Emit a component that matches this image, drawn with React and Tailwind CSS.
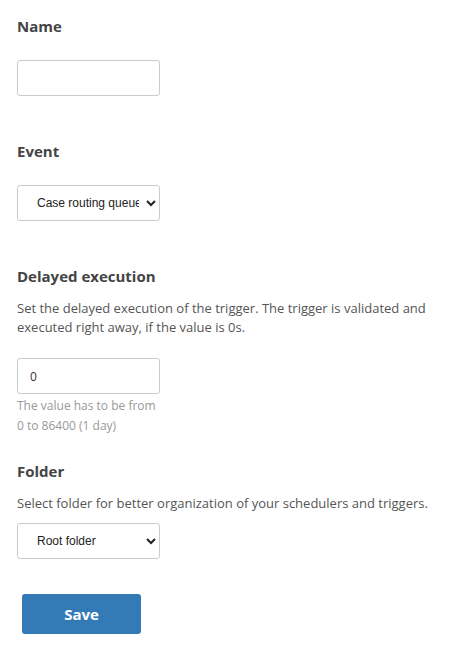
import React from "react";

const font = { fontFamily: '"Open Sans", "Liberation Sans", sans-serif' };

export default function App() {
  return (
    <div
      className="w-[458px] min-h-[665px] bg-white pl-[17px] pr-4 pt-[16px] text-[#555]"
      style={font}
    >
      <h3 className="text-[15px] leading-[20px] font-bold text-[#444]">Name</h3>
      <input
        type="text"
        className="mt-[24px] block h-[36px] w-[143px] rounded-[3px] border border-[#ccc] bg-white px-3 text-[12px] text-[#333] outline-none"
      />

      <h3 className="mt-[45px] text-[15px] leading-[20px] font-bold text-[#444]">Event</h3>
      <select
        defaultValue="crq"
        className="mt-[24px] block h-[36px] w-[143px] rounded-[3px] border border-[#ccc] bg-white pl-[15px] pr-[4px] text-[12px] text-[#222]"
        style={{ fontFamily: '"Liberation Sans", Arial, sans-serif' }}
      >
        <option value="crq">Case routing queue event</option>
      </select>

      <h3 className="mt-[45px] text-[15px] leading-[20px] font-bold text-[#444]">
        Delayed execution
      </h3>
      <p className="mt-[13px] text-[13px] leading-[18.6px] text-[#555]">
        Set the delayed execution of the trigger. The trigger is validated and executed right
        away, if the value is 0s.
      </p>
      <input
        type="text"
        defaultValue="0"
        className="mt-[22px] block h-[36px] w-[143px] rounded-[3px] border border-[#ccc] bg-white px-3 text-[12px] text-[#333] outline-none"
      />
      <p className="mt-[2px] w-[143px] text-[12px] leading-[20px] text-[#999]">
        The value has to be from 0 to 86400 (1 day)
      </p>

      <h3 className="mt-[25px] text-[15px] leading-[20px] font-bold text-[#444]">Folder</h3>
      <p className="mt-[13px] text-[13px] leading-[19px] text-[#555]">
        Select folder for better organization of your schedulers and triggers.
      </p>
      <select
        defaultValue="root"
        className="mt-[10px] block h-[36px] w-[143px] rounded-[3px] border border-[#ccc] bg-white pl-[15px] pr-[4px] text-[12px] text-[#222]"
        style={{ fontFamily: '"Liberation Sans", Arial, sans-serif' }}
      >
        <option value="root">Root folder</option>
      </select>

      <button
        type="button"
        className="ml-[5px] mt-[35px] flex h-[40px] w-[119px] items-center justify-center rounded-[3px] bg-[#337ab7] text-[15px] font-bold text-white"
      >
        Save
      </button>
    </div>
  );
}
